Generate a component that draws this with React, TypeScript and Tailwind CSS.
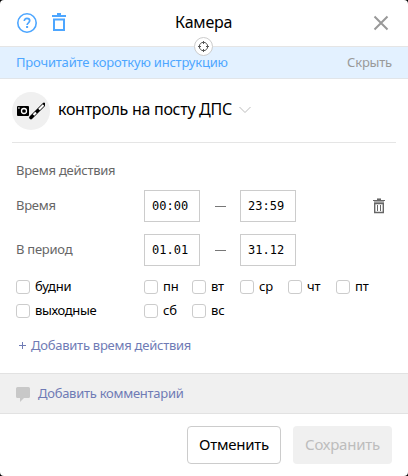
import type { ReactNode } from "react";

function Check({ label, className }: { label: string; className: string }) {
  return (
    <label className={`flex h-[14px] items-center gap-[5px] text-[13px] leading-[14px] text-black ${className}`}>
      <span className="h-[14px] w-[14px] shrink-0 rounded-[3px] border border-[#ccc] bg-white" />
      <span className="-mt-[2px] whitespace-nowrap">{label}</span>
    </label>
  );
}

function Range({ label, from, to, children }: { label: string; from: string; to: string; children?: ReactNode }) {
  return (
    <div className="flex h-8 items-center">
      <span className="w-32 text-[13px] tracking-[-0.25px] text-[#666]">{label}</span>
      <span className="flex h-8 w-14 items-center border border-[#ccc] pl-[7px] font-['DejaVu_Sans_Mono',monospace] text-[12px] text-black">{from}</span>
      <span className="ml-[15px] mr-[14px] h-px w-[11px] bg-[#777]" />
      <span className="flex h-8 w-14 items-center border border-[#ccc] pl-[7px] font-['DejaVu_Sans_Mono',monospace] text-[12px] text-black">{to}</span>
      {children}
    </div>
  );
}

export default function App() {
  return (
    <div className="h-[476px] w-[408px] bg-black font-['Noto_Sans',sans-serif]">
      <div className="flex h-full w-full flex-col overflow-hidden rounded-[4px] bg-white">
        <header className="relative flex h-[47px] shrink-0 items-center border-b border-[#e5e5e5] pl-4 pr-[19px]">
          <svg width="22" height="22" viewBox="0 0 22 22" fill="none" stroke="#4da6ff" strokeWidth="2">
            <circle cx="11" cy="11" r="9.2" strokeWidth="1.6" />
            <path d="M8.3 9.1c0-1.6 1.1-2.7 2.7-2.7s2.7 1 2.7 2.4c0 2-2.6 2-2.6 4.2" strokeWidth="1.7" />
            <path d="M10.1 15h2" />
          </svg>
          <svg className="ml-[14px]" width="14" height="20" viewBox="0 0 14 20" fill="none" stroke="#4da6ff" strokeWidth="2">
            <path d="M0 3h14M5 1h4M2 6.500h10v10.500H2z" />
          </svg>
          <h1 className="-mt-[2px] ml-[109px] whitespace-nowrap text-[16px] leading-5 tracking-[-0.2px] text-black">Камера</h1>
          <svg className="ml-auto" width="16" height="16" viewBox="0 0 16 16" fill="none" stroke="#999" strokeWidth="2">
            <path d="M1.5 1.5l13 13M14.5 1.5l-13 13" />
          </svg>
          <span className="absolute left-[194px] top-[37px] flex h-[19px] w-[19px] items-center justify-center rounded-full border border-[#ccc] bg-white">
            <svg width="13" height="13" viewBox="0 0 13 13" fill="none" stroke="#555">
              <circle cx="6.5" cy="6.5" r="4.2" />
              <path d="M6.5 1v3M6.5 9v3M1 6.5h3M9 6.5h3" />
            </svg>
          </span>
        </header>
        <div className="flex h-8 shrink-0 items-center justify-between border-b border-[#e1e5e9] bg-[#e3f1ff] px-4 text-[13px] tracking-[-0.2px]">
          <span className="text-[#4da6ff]">Прочитайте короткую инструкцию</span>
          <span className="text-[#999]">Скрыть</span>
        </div>
        <section className="mx-3 flex h-16 shrink-0 items-center border-b border-[#e5e5e5]">
          <span className="flex h-[38px] w-[38px] items-center justify-center rounded-full bg-[#f0f0f0]">
            <svg width="28" height="18" viewBox="0 0 28 18">
              <path d="M1 4h10a1 1 0 0 1 1 1v8a1 1 0 0 1-1 1H1a1 1 0 0 1-1-1V5a1 1 0 0 1 1-1z" fill="black" />
              <circle cx="7" cy="9" r="2.5" fill="none" stroke="white" strokeWidth="1.3" />
              <path d="M1 6h1.800" stroke="white" />
              <path d="M14 15.500L27 2.500" stroke="black" strokeWidth="3.6" strokeLinecap="round" />
              <path d="M16.500 13l2.500-2.500M22 7.500l4.500-4.500" stroke="white" strokeWidth="2.2" />
            </svg>
          </span>
          <span className="-mt-[3px] ml-2 whitespace-nowrap text-[16px] leading-5 tracking-[-0.28px] text-black">контроль на посту ДПС</span>
          <svg className="-mt-px ml-[7px]" width="12" height="8" viewBox="0 0 12 8" fill="none" stroke="#bbb">
            <path d="M.5 1L6 6.500 11.500 1" />
          </svg>
        </section>
        <main className="flex h-[230px] shrink-0 flex-col px-4 pt-[17px]">
          <h2 className="mb-[10px] text-[13px] leading-5 tracking-[-0.25px] text-[#666]">Время действия</h2>
          <div className="flex flex-col gap-3">
            <Range label="Время" from="00:00" to="23:59">
              <svg className="ml-auto mr-[7px]" width="12" height="16" viewBox="0 0 12 16" fill="none" stroke="#666">
                <path d="M4 .5h4" stroke="#aaa" />
                <path d="M4 1.500h4" />
                <path d="M0 2.500h12" />
                <path d="M1 4h10" stroke="#aaa" strokeWidth="2" />
                <path d="M1.700 5.500h8.600v9H1.700z" strokeWidth="1.4" />
                <path d="M4.500 7v6M7.500 7v6" />
              </svg>
            </Range>
            <Range label="В период" from="01.01" to="31.12" />
          </div>
          <div className="mt-[14px] flex">
            <Check label="будни" className="w-32 tracking-[-0.15px]" />
            <Check label="пн" className="w-12 tracking-[-0.2px]" />
            <Check label="вт" className="w-12 tracking-[-0.2px]" />
            <Check label="ср" className="w-12 tracking-[-0.2px]" />
            <Check label="чт" className="w-12 tracking-[-0.2px]" />
            <Check label="пт" className="w-12 tracking-[-0.2px]" />
          </div>
          <div className="mt-[10px] flex">
            <Check label="выходные" className="w-32 tracking-[-0.35px]" />
            <Check label="сб" className="w-12 tracking-[-0.2px]" />
            <Check label="вс" className="w-12 tracking-[-0.2px]" />
          </div>
          <button className="ml-[3px] mt-[17px] flex items-center gap-[5px] text-[13px] leading-5 tracking-[-0.25px] text-[#6f7bb5]">
            <svg className="mt-px" width="7" height="7" viewBox="0 0 7 7" stroke="currentColor"><path d="M0 3.500h7M3.500 0v7" /></svg>
            <span>Добавить время действия</span>
          </button>
        </main>
        <div className="flex h-[41px] shrink-0 items-center border-y border-[#e2e2e2] bg-[#f0f0f0] px-4 text-[13px] tracking-[-0.27px] text-[#6f7bb5]">
          <svg className="mt-px" width="14" height="15" viewBox="0 0 14 15" fill="#c8c8c8"><path d="M1.500 0h11A1.500 1.500 0 0 1 14 1.500v8a1.500 1.500 0 0 1-1.500 1.500H8l-4 4v-4H1.500A1.500 1.500 0 0 1 0 9.500v-8A1.500 1.500 0 0 1 1.500 0z" /></svg>
          <span className="ml-2">Добавить комментарий</span>
        </div>
        <footer className="flex justify-end gap-3 pr-4 pt-3 text-[15px] tracking-[-0.25px]">
          <button className="h-[38px] w-[94px] whitespace-nowrap rounded-[4px] border border-[#ccc] bg-white pb-[2px] text-black">Отменить</button>
          <button className="h-[38px] w-[99px] whitespace-nowrap rounded-[4px] bg-[#f0f0f0] pb-[2px] text-[#bdbdbd]">Сохранить</button>
        </footer>
      </div>
    </div>
  );
}
